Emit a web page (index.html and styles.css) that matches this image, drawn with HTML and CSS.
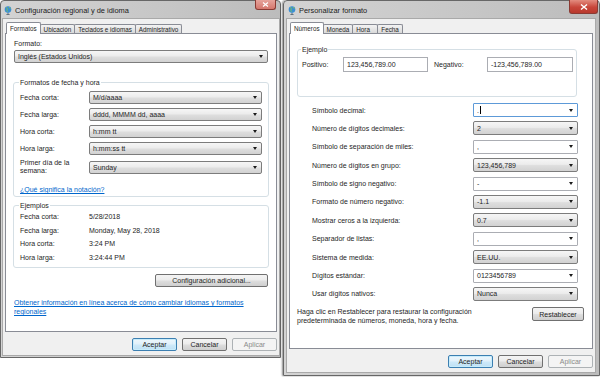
FILE: index.html
```html
<!DOCTYPE html>
<html lang="es">
<head>
<meta charset="UTF-8">
<meta name="viewport" content="width=device-width, initial-scale=1.0">
<title>Configuración regional y de idioma</title>
<link rel="stylesheet" href="styles.css">
</head>
<body>

<div class="desk">

  <!-- Configuración regional y de idioma -->
  <div class="win win-regional">
    <div class="titlebar">
      <svg class="appicon" viewBox="0 0 8 9" width="8" height="9">
        <circle cx="4" cy="3.6" r="3.3" fill="#3b8fd3"/>
        <path d="M2.2 1.4c1 .4 1.4 1.3.9 2.2-.5.8-.1 1.6.6 2.1M5 1c.2.8.9 1 1.5 1.3" fill="none" stroke="#86c84f" stroke-width="1"/>
        <path d="M4 7v1.6M2.4 8.6h3.2" stroke="#55636f" stroke-width="0.9"/>
      </svg>
      <span class="title">Configuración regional y de idioma</span>
      <span class="close close-dim">
        <svg viewBox="0 0 7 5" width="7" height="5"><path d="M1 .5l5 4M6 .5l-5 4" stroke="#fff" stroke-width="1.2"/></svg>
      </span>
    </div>
    <div class="client">
      <div class="tabs">
        <span class="tab active">Formatos</span>
        <span class="tab">Ubicación</span>
        <span class="tab">Teclados e idiomas</span>
        <span class="tab">Administrativo</span>
      </div>
      <div class="panel panel-regional">
        <div class="line">Formato:</div>
        <div class="combo combo-list combo-format">Inglés (Estados Unidos)</div>

        <fieldset class="group group-dates">
          <legend>Formatos de fecha y hora</legend>
          <div class="frow"><span class="flabel">Fecha corta:</span><div class="combo combo-list">M/d/aaaa</div></div>
          <div class="frow"><span class="flabel">Fecha larga:</span><div class="combo combo-list">dddd, MMMM dd, aaaa</div></div>
          <div class="frow"><span class="flabel">Hora corta:</span><div class="combo combo-list">h:mm tt</div></div>
          <div class="frow"><span class="flabel">Hora larga:</span><div class="combo combo-list">h:mm:ss tt</div></div>
          <div class="frow frow-tall"><span class="flabel">Primer día de la semana:</span><div class="combo combo-list">Sunday</div></div>
          <a href="#" class="link link-notation">¿Qué significa la notación?</a>
        </fieldset>

        <fieldset class="group group-examples">
          <legend>Ejemplos</legend>
          <div class="erow"><span class="flabel">Fecha corta:</span><span>5/28/2018</span></div>
          <div class="erow"><span class="flabel">Fecha larga:</span><span>Monday, May 28, 2018</span></div>
          <div class="erow"><span class="flabel">Hora corta:</span><span>3:24 PM</span></div>
          <div class="erow"><span class="flabel">Hora larga:</span><span>3:24:44 PM</span></div>
        </fieldset>

        <div class="more">
          <button class="btn btn-more">Configuración adicional...</button>
        </div>

        <a href="#" class="link link-info">Obtener información en línea acerca de cómo cambiar idiomas y formatos regionales</a>
      </div>
      <div class="actions">
        <button class="btn btn-default">Aceptar</button>
        <button class="btn">Cancelar</button>
        <button class="btn" disabled>Aplicar</button>
      </div>
    </div>
  </div>

  <!-- Personalizar formato -->
  <div class="win win-custom">
    <div class="titlebar">
      <svg class="appicon" viewBox="0 0 8 9" width="8" height="9">
        <circle cx="4" cy="3.6" r="3.3" fill="#3b8fd3"/>
        <path d="M2.2 1.4c1 .4 1.4 1.3.9 2.2-.5.8-.1 1.6.6 2.1M5 1c.2.8.9 1 1.5 1.3" fill="none" stroke="#86c84f" stroke-width="1"/>
        <path d="M4 7v1.6M2.4 8.6h3.2" stroke="#55636f" stroke-width="0.9"/>
      </svg>
      <span class="title">Personalizar formato</span>
      <span class="close close-big">
        <svg viewBox="0 0 8 6" width="8" height="6"><path d="M1 .5l6 5M7 .5l-6 5" stroke="#fff" stroke-width="1.4"/></svg>
      </span>
    </div>
    <div class="client">
      <div class="tabs">
        <span class="tab active">Números</span>
        <span class="tab">Moneda</span>
        <span class="tab tab-hora">Hora</span>
        <span class="tab">Fecha</span>
      </div>
      <div class="panel panel-custom">
        <fieldset class="group group-sample">
          <legend>Ejemplo</legend>
          <div class="sample">
            <span class="slabel slabel-pos">Positivo:</span>
            <span class="textbox textbox-pos">123,456,789.00</span>
            <span class="slabel slabel-neg">Negativo:</span>
            <span class="textbox textbox-neg">-123,456,789.00</span>
          </div>
        </fieldset>

        <div class="settings">
          <div class="srow"><span>Símbolo decimal:</span><div class="combo combo-edit combo-focus">.<span class="caret"></span></div></div>
          <div class="srow"><span>Número de dígitos decimales:</span><div class="combo combo-list">2</div></div>
          <div class="srow"><span>Símbolo de separación de miles:</span><div class="combo combo-edit">,</div></div>
          <div class="srow"><span>Número de dígitos en grupo:</span><div class="combo combo-list">123,456,789</div></div>
          <div class="srow"><span>Símbolo de signo negativo:</span><div class="combo combo-edit">-</div></div>
          <div class="srow"><span>Formato de número negativo:</span><div class="combo combo-list">-1.1</div></div>
          <div class="srow"><span>Mostrar ceros a la izquierda:</span><div class="combo combo-list">0.7</div></div>
          <div class="srow"><span>Separador de listas:</span><div class="combo combo-edit">,</div></div>
          <div class="srow"><span>Sistema de medida:</span><div class="combo combo-list">EE.UU.</div></div>
          <div class="srow"><span>Dígitos estándar:</span><div class="combo combo-edit">0123456789</div></div>
          <div class="srow"><span>Usar dígitos nativos:</span><div class="combo combo-list">Nunca</div></div>
        </div>

        <div class="reset">
          <p class="note">Haga clic en Restablecer para restaurar la configuración predeterminada de números, moneda, hora y fecha.</p>
          <button class="btn btn-reset">Restablecer</button>
        </div>
      </div>
      <div class="actions">
        <button class="btn btn-default">Aceptar</button>
        <button class="btn">Cancelar</button>
        <button class="btn" disabled>Aplicar</button>
      </div>
    </div>
  </div>

</div>

</body>
</html>
```

FILE: styles.css
```css
* {
  box-sizing: border-box;
}

html, body {
  margin: 0;
}

body {
  width: 600px;
  height: 377px;
  overflow: hidden;
  background: #fff;
  font-family: "Liberation Sans", Arial, sans-serif;
  font-size: 7px;
  color: #1e1e1e;
}

.desk {
  display: flex;
  align-items: flex-start;
}

/* window frame */
.win {
  display: flex;
  flex-direction: column;
  background: linear-gradient(to right, #d3d3d3, #c6c6c6 60%, #bcbcbc);
  border: 1px solid #676767;
  border-radius: 4px 4px 0 0;
}

.win-regional {
  width: 281px;
  height: 358px;
  padding: 0 1px 2px 2px;
}

.win-custom {
  width: 317px;
  height: 376px;
  margin-left: 2px;
  padding: 0 4px 3px 3px;
  box-shadow: -1px 0 2px rgba(0, 0, 0, 0.45);
}

.titlebar {
  height: 18px;
  display: flex;
  align-items: center;
  gap: 3px;
  padding-left: 1px;
  font-size: 7.4px;
  color: #1a1a1a;
}

.appicon {
  flex: none;
}

.close {
  margin-left: auto;
  align-self: flex-start;
  margin-top: -1px;
  display: flex;
  align-items: center;
  justify-content: center;
  border-radius: 0 0 3px 3px;
  border: 1px solid #8a3a33;
  border-top: none;
}

.close-dim {
  width: 21px;
  height: 10px;
  margin-right: 3px;
  background: linear-gradient(#e6a39b, #d5776d);
}

.close-big {
  width: 29px;
  height: 14px;
  margin-right: -3px;
  background: linear-gradient(#e38c7f, #c8463a 55%, #b8382c);
}

/* dialog body */
.client {
  flex: 1;
  display: flex;
  flex-direction: column;
  padding: 3px 2px 4px;
  background: #f0f0f0;
  box-shadow: 0 0 0 1px #a9a9a9;
}

.tabs {
  height: 11px;
  display: flex;
  align-items: flex-end;
  padding-left: 1px;
  font-size: 6.3px;
}

.tab {
  height: 9px;
  display: flex;
  align-items: center;
  padding: 0 3px;
  border: 1px solid #898c95;
  border-bottom: none;
  border-radius: 2px 2px 0 0;
  background: linear-gradient(#f3f3f3, #e6e6e6 50%, #d9d9d9);
  margin-left: -1px;
}

.tab:first-child {
  margin-left: 0;
}

.tab.active {
  height: 12px;
  margin-bottom: -1px;
  background: #fff;
  position: relative;
  z-index: 1;
}

.tab-hora {
  min-width: 26px;
}

.panel {
  flex: 1;
  display: flex;
  flex-direction: column;
  background: #fff;
  border: 1px solid #898c95;
}

.panel-regional {
  padding: 5px 8px 0;
}

.line {
  line-height: 9px;
}

/* combo boxes */
.combo {
  height: 13px;
  display: flex;
  align-items: center;
  padding: 0 4px 0 3px;
  border-radius: 2px;
  white-space: nowrap;
}

.combo::after {
  content: "";
  margin-left: auto;
  border-top: 3px solid #1a1a1a;
  border-left: 2.5px solid transparent;
  border-right: 2.5px solid transparent;
}

.combo-list {
  background: linear-gradient(#f6f6f6, #ececec 45%, #dedede 55%, #d2d2d2);
  border: 1px solid #7c7c7c;
}

.combo-edit {
  background: #fff;
  border: 1px solid #abadb3;
  border-radius: 1px;
}

.combo-focus {
  border-color: #5d9ad8;
}

.caret {
  width: 1px;
  height: 8px;
  margin-left: 1px;
  background: #000;
}

.combo-format {
  margin-top: 2px;
}

/* group boxes */
.group {
  margin: 0 -1px;
  border: 1px solid #d5dfe5;
  border-radius: 3px;
  min-width: 0;
}

.group legend {
  line-height: 9px;
  padding: 0 1px;
  margin-left: -1px;
}

.group-dates {
  margin-top: 15px;
  padding: 4px 6px 2px;
}

.frow {
  display: flex;
  align-items: center;
  height: 13px;
  margin-bottom: 4px;
}

.frow-tall {
  height: 16px;
  margin-bottom: 0;
}

.frow-tall .flabel {
  line-height: 8px;
}

.flabel {
  width: 69px;
  flex: none;
}

.frow .combo {
  flex: 1;
}

.link {
  color: #0066cc;
  text-decoration: underline;
  line-height: 9px;
}

.link-notation {
  display: block;
  margin-top: 10px;
}

.group-examples {
  margin-top: 4px;
  padding: 0 6px 3px;
}

.erow {
  display: flex;
  align-items: center;
  height: 13.5px;
}

.more {
  display: flex;
  justify-content: flex-end;
  margin-top: 6px;
}

.link-info {
  margin-top: 11px;
}

/* buttons */
.btn {
  height: 13px;
  width: 45px;
  padding: 0;
  font-family: inherit;
  font-size: 7px;
  color: #1e1e1e;
  border: 1px solid #707070;
  border-radius: 2px;
  background: linear-gradient(#f4f4f4, #ececec 45%, #dddddd 55%, #cfcfcf);
}

.btn-default {
  border-color: #3c7fb1;
  background: linear-gradient(#eef7fc, #e1f1fb 45%, #cde9f9 55%, #bfe0f4);
  box-shadow: inset 0 0 0 1px #c8ecfb;
}

.btn:disabled {
  border-color: #adb2b5;
  background: #f4f4f4;
  color: #8a8a8a;
}

.btn-more {
  width: 113px;
}

.actions {
  display: flex;
  justify-content: flex-end;
  gap: 5px;
  margin-top: 6px;
}

/* Personalizar formato */
.panel-custom {
  padding-top: 11px;
}

.group-sample {
  margin: 0 15px 0 7px;
  padding: 3px 3px 24px 4px;
}

.sample {
  display: flex;
  align-items: center;
}

.slabel-pos {
  width: 41px;
}

.slabel-neg {
  width: 53px;
  margin-left: 6px;
}

.textbox {
  height: 15px;
  display: flex;
  align-items: center;
  padding-left: 3px;
  border: 1px solid #abadb3;
  background: #fff;
}

.textbox-pos {
  width: 85px;
}

.textbox-neg {
  width: 86px;
}

.settings {
  display: flex;
  flex-direction: column;
  gap: 4.4px;
  margin-top: 6px;
  padding: 0 14px 0 22px;
}

.srow {
  display: flex;
  align-items: center;
  justify-content: space-between;
}

.srow .combo {
  width: 105px;
  height: 14px;
}

.reset {
  display: flex;
  justify-content: space-between;
  align-items: flex-start;
  margin-top: 6.5px;
  padding: 0 8px 0 7px;
}

.note {
  width: 200px;
  margin: 0;
  line-height: 9px;
}

.btn-reset {
  width: 52px;
  height: 14px;
}
```
